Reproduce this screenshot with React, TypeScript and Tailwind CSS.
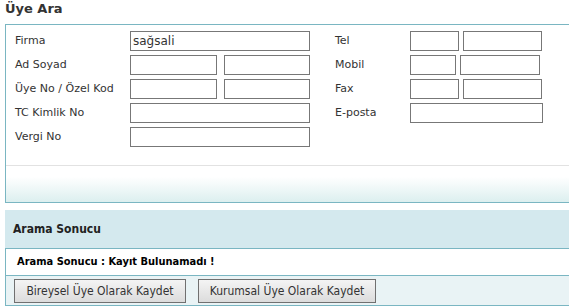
import React from 'react';

const inputCls = 'h-[20px] border border-[#777] bg-white px-[2px] text-[12px] text-[#333] outline-none';

const Field: React.FC<{ w: number; value?: string }> = ({ w, value }) => (
  <input className={inputCls} style={{ width: w }} defaultValue={value} readOnly />
);

const Row: React.FC<{ label: string; labelW: number; children: React.ReactNode }> = ({ label, labelW, children }) => (
  <div className="flex h-[24px] items-center">
    <span className="shrink-0 text-[11px] text-[#333]" style={{ width: labelW }}>
      {label}
    </span>
    <div className="flex gap-[4px]">{children}</div>
  </div>
);

export default function App() {
  return (
    <div className="h-[308px] w-[569px] overflow-hidden bg-white font-['DejaVu_Sans',sans-serif] text-[#333]">
      <h1 className="h-[24px] pl-[5px] pt-[1px] text-[13px] font-bold leading-[16px] text-[#333]">Üye Ara</h1>

      {/* search box */}
      <div className="ml-[5px] border-b border-l border-t border-[#7ab6c2]">
        <div className="flex h-[140px] pl-[9px] pt-[4px]">
          <div className="w-[320px]">
            <Row label="Firma" labelW={115}>
              <Field w={180} value="sağsali" />
            </Row>
            <Row label="Ad Soyad" labelW={115}>
              <div className="flex gap-[7px]">
                <Field w={87} />
                <Field w={86} />
              </div>
            </Row>
            <Row label="Üye No / Özel Kod" labelW={115}>
              <div className="flex gap-[7px]">
                <Field w={87} />
                <Field w={86} />
              </div>
            </Row>
            <Row label="TC Kimlik No" labelW={115}>
              <Field w={180} />
            </Row>
            <Row label="Vergi No" labelW={115}>
              <Field w={180} />
            </Row>
          </div>
          <div>
            <Row label="Tel" labelW={75}>
              <Field w={49} />
              <Field w={79} />
            </Row>
            <Row label="Mobil" labelW={75}>
              <Field w={46} />
              <Field w={80} />
            </Row>
            <Row label="Fax" labelW={75}>
              <Field w={49} />
              <Field w={79} />
            </Row>
            <Row label="E-posta" labelW={75}>
              <Field w={133} />
            </Row>
          </div>
        </div>
        <div className="h-[37px] border-t border-[#e2e2e2] bg-gradient-to-b from-white from-30% to-[#dcefef]" />
      </div>

      {/* result */}
      <div className="ml-[5px] mt-[7px] flex h-[39px] items-center border-b border-[#7ab6c2] bg-[#d4e9ee] pl-[8px] font-['DejaVu_Sans_Condensed',sans-serif] text-[12px] font-bold text-[#222]">
        Arama Sonucu
      </div>
      <div className="ml-[5px] flex h-[27px] items-center border-b border-l border-[#7ab6c2] pl-[11px] font-['DejaVu_Sans_Condensed',sans-serif] text-[11px] font-bold text-black">
        Arama Sonucu : Kayıt Bulunamadı !
      </div>
      <div className="ml-[5px] flex h-[30px] items-center gap-[12px] border-b border-l border-[#7ab6c2] bg-[#e9f3f5] pl-[8px]">
        <button className="h-[24px] w-[172px] border border-[#707070] bg-gradient-to-b from-[#f4f4f4] to-[#dcdcdc] font-['DejaVu_Sans_Condensed',sans-serif] text-[12px] text-[#333]">
          Bireysel Üye Olarak Kaydet
        </button>
        <button className="h-[24px] w-[178px] border border-[#707070] bg-gradient-to-b from-[#f4f4f4] to-[#dcdcdc] font-['DejaVu_Sans_Condensed',sans-serif] text-[12px] text-[#333]">
          Kurumsal Üye Olarak Kaydet
        </button>
      </div>
    </div>
  );
}
